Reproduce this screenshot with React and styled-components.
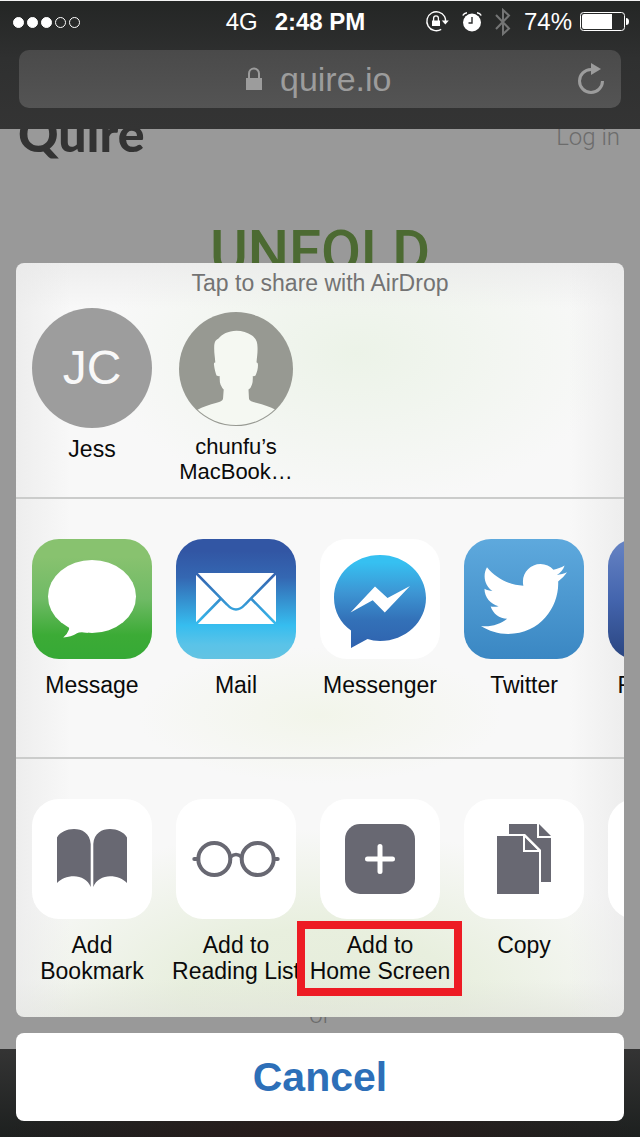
import React from "react";
import styled, { createGlobalStyle } from "styled-components";
import { FaTwitter } from "react-icons/fa";

const GlobalStyle = createGlobalStyle`
  *, *::before, *::after { box-sizing: border-box; }
  body { margin: 0; background: #999; font-family: "Liberation Sans", Arial, sans-serif; }
  button { border: 0; padding: 0; background: none; color: inherit; font: inherit; cursor: pointer; }
  svg { display: block; flex: none; }
`;

const GLYPH = "#686872";

const Screen = styled.div`
  position: relative;
  display: flex;
  flex-direction: column;
  min-height: 100vh;
  overflow: hidden;
`;

/* ---------- browser chrome ---------- */

const Chrome = styled.header`
  position: relative;
  z-index: 1;
  padding: 0 19px 21px;
  border-top: 1px solid #f4f4f4;
  background: linear-gradient(#242625, #2f3030 45%, #343434);
`;

const StatusBar = styled.div`
  display: grid;
  grid-template-columns: 1fr auto 1fr;
  align-items: center;
  column-gap: 17px;
  height: 42px;
  margin: 0 -8px 7px;
  color: #fff;
  font-size: 24px;
  line-height: 28px;
`;

const StatusGroup = styled.div`
  display: flex;
  align-items: center;
  justify-content: ${(p) => (p.$end ? "flex-end" : "space-between")};
  gap: 13px;
`;

const Clock = styled.time`
  font-weight: 700;
`;

const Signal = styled.div`
  display: flex;
  gap: 3px;
  padding-left: 2px;
`;

const Dot = styled.span`
  width: 11px;
  height: 11px;
  border: 1px solid #fff;
  border-radius: 50%;
  background: ${(p) => (p.$on ? "#fff" : "transparent")};
`;

const Power = styled.div`
  display: flex;
  align-items: center;
  gap: 8px;
`;

const AddressBar = styled.div`
  display: grid;
  grid-template-columns: 1fr auto 1fr;
  align-items: center;
  height: 58px;
  padding: 0 16px;
  border-radius: 10px;
  background: linear-gradient(#4a4a4a, #545454);
  color: #9c9c9c;
`;

const Address = styled.label`
  grid-column: 2;
  display: flex;
  align-items: center;
  gap: 18px;
`;

const AddressInput = styled.input`
  width: 114px;
  height: 40px;
  padding: 0;
  border: 0;
  outline: 0;
  background: none;
  color: inherit;
  font: 34px/40px "Liberation Sans", Arial, sans-serif;
`;

const ReloadButton = styled.button`
  justify-self: end;
`;

/* ---------- dimmed page behind the sheet ---------- */

const WebPage = styled.main`
  flex: 1;
  display: flex;
  flex-direction: column;
  align-items: center;
  background: #999;
  color: #6c6c6c;
  font-family: Roboto, sans-serif;
  font-weight: 300;
`;

const SiteNav = styled.nav`
  display: flex;
  align-items: center;
  justify-content: space-between;
  align-self: stretch;
  height: 56px;
  margin-top: -24px;
  padding: 0 20px 0 18px;
`;

const Brand = styled.a`
  color: #333;
  font: 900 50px/56px Lato, sans-serif;
  text-decoration: none;
`;

const LoginLink = styled.a`
  padding-top: 8px;
  color: inherit;
  font-size: 24px;
  line-height: 28px;
  text-decoration: none;
`;

const Headline = styled.h1`
  margin: 58px 0 auto;
  color: #4c6a32;
  font: 500 58px/64px Roboto, sans-serif;
`;

const Separator = styled.p`
  margin: 0 0 20px;
  font-size: 24px;
  line-height: 28px;
`;

const BottomBar = styled.footer`
  height: 88px;
  background:
    radial-gradient(ellipse 50% 60% at 50% 100%, #291b1a, #291b1a00),
    linear-gradient(#343434, #1d201f);
`;

/* ---------- share sheet ---------- */

const Sheet = styled.div`
  position: absolute;
  right: 16px;
  bottom: 16px;
  left: 16px;
  display: flex;
  flex-direction: column;
  gap: 16px;
`;

const Panel = styled.section`
  overflow: hidden;
  border-radius: 8px;
  background:
    linear-gradient(90deg, #e8e8e8aa, #e8e8e800 9%, #e8e8e800 91%, #e8e8e8aa),
    linear-gradient(#e6e6e699, #e6e6e600 6%, #e6e6e600 95%, #e0e2da99),
    radial-gradient(ellipse 56% 22% at 50% 97%, #e6eddb, #e8efde 40%, #e8efde00),
    radial-gradient(ellipse 42% 20% at 56% 12%, #ecf3e8, #ecf3e800),
    radial-gradient(ellipse 30% 9% at 50% 60%, #f2f5ea, #f2f5ea00),
    #f8f8f8;
`;

const Group = styled.div`
  height: 258px;
  padding: 40px 16px 0;

  & + & { border-top: 2px solid #cbcccb; height: 260px; }
`;

const AirDropGroup = styled(Group)`
  height: 234px;
  padding-top: 7px;
`;

const AirDropTitle = styled.h2`
  margin: 0 0 12px;
  color: #737373;
  font-size: 23px;
  font-weight: 400;
  line-height: 26px;
  text-align: center;
`;

const Row = styled.ul`
  display: flex;
  gap: 24px;
  margin: 0;
  padding: 0;
  list-style: none;
`;

const ItemButton = styled.button`
  display: flex;
  flex-direction: column;
  align-items: center;
  gap: ${(p) => (p.$contact ? 8 : 13)}px;
  width: 120px;
  padding-top: ${(p) => (p.$inset ? 4 : 0)}px;
`;

const Tile = styled.span`
  display: grid;
  place-items: center;
  width: 120px;
  height: 120px;
  overflow: hidden;
  border-radius: 27px;
  background: ${(p) => p.$fill || "#fff"};
  color: #fff;
`;

const Label = styled.span`
  position: relative;
  color: #0a0a0a;
  font-size: ${(p) => (p.$small ? 22 : 23)}px;
  line-height: ${(p) => (p.$small ? 25 : 26)}px;
  text-align: center;
  white-space: pre;
`;

const Highlight = styled.span`
  position: absolute;
  top: -11px;
  right: -12px;
  bottom: -12px;
  left: -13px;
  border: 8px solid #ed1c24;
`;

const Initials = styled.span`
  display: grid;
  place-items: center;
  width: 120px;
  height: 120px;
  border-radius: 50%;
  background: #9d9d9d;
  color: #f8f8f8;
  font-size: 48px;
  line-height: 56px;
`;

const CancelButton = styled.button`
  height: 88px;
  border-radius: 8px;
  background: #fff;
  color: #2d6fb8;
  font-size: 41px;
  font-weight: 700;
  line-height: 48px;
`;

/* ---------- drawings ---------- */

const RotationLock = () => (
  <svg width="24" height="24" viewBox="0 0 24 24" fill="none" aria-hidden="true">
    <path d="M19.6 6.5A9.5 9.5 0 1 0 16.2 19.4M19.6 6.5A9.5 9.5 0 0 1 20.5 11" stroke="#fff" strokeWidth="1.4" />
    <path d="M16.8 10.5h7L20.3 14.5z" fill="#fff" />
    <path d="M7 10.5h8V16H7z" fill="#fff" />
    <path d="M8.6 11V8.3a2.4 2.4 0 0 1 4.8 0V11" stroke="#fff" strokeWidth="1.3" />
  </svg>
);

const Alarm = () => (
  <svg width="20" height="20" viewBox="0 0 20 20" fill="none" aria-hidden="true">
    <circle cx="10" cy="10.500" r="9" fill="#fff" />
    <path d="M10 5v6H6.500" stroke="#2a2b2b" strokeWidth="1.400" />
    <path d="M.8 4.500Q2 1.500 5 1.300M19.200 4.500Q18 1.500 15 1.300" stroke="#2a2b2b" strokeWidth="3.500" />
    <path d="M.8 3.500Q2 1 5 .8M19.200 3.500Q18 1 15 .8" stroke="#fff" strokeWidth="1.500" />
  </svg>
);

const Bluetooth = () => (
  <svg width="16" height="28" viewBox="0 0 16 28" fill="none" aria-hidden="true">
    <path d="M1 7l13 13.500-6 5.500V2l6 5.500L1 21" stroke="#747575" strokeWidth="2" />
  </svg>
);

const Battery = () => (
  <svg width="49" height="20" viewBox="0 0 49 20" fill="none" aria-hidden="true">
    <rect x=".5" y=".5" width="44" height="18" rx="3" stroke="#fff" />
    <path d="M2 4q0-2 2-2h28v15H4q-2 0-2-2z" fill="#fff" />
    <path d="M46 6q3 0 3 3.500T46 13z" fill="#fff" />
  </svg>
);

const Padlock = () => (
  <svg width="16" height="24" viewBox="0 0 16 24" fill="none" aria-hidden="true">
    <path d="M0 11h16v12H0z" fill="#9c9c9c" />
    <path d="M3 12V6.500a5 5 0 0 1 10 0V12" stroke="#9c9c9c" strokeWidth="2" />
  </svg>
);

const Reload = () => (
  <svg width="28" height="34" viewBox="0 0 28 34" fill="none" aria-hidden="true">
    <path d="M14 7.500A11.500 11.500 0 1 0 25.500 19" stroke="#9c9c9c" strokeWidth="3" />
    <path d="M14 1l10 6-10 6z" fill="#9c9c9c" />
  </svg>
);

const Person = () => (
  <svg width="114" height="114" viewBox="0 0 114 114" aria-hidden="true">
    <defs>
      <clipPath id="avatar-clip"><circle cx="57" cy="57" r="56" /></clipPath>
    </defs>
    <circle cx="57" cy="57" r="57" fill="#979992" />
    <path
      clipPath="url(#avatar-clip)"
      fill="#f5f8f2"
      d="M57.500 18.700C49 19 43 22 39.500 26.500C36 28 35.300 31 35.200 35C35 41 36 45 36.300 50.500C35 50 34.800 51.500 35 53C35.500 57 36.500 61 37.500 63.500Q40 64.500 40.700 64Q40.500 70 41.500 72.500Q43 76 44.700 77.500L44 87Q43 89.500 37.700 90.700C30 93 24 94.500 18 98V114H97V98C91 94.500 85 93 77 90.700Q71 89.500 70 87L69.500 77.500Q72 76 73 72.500Q74 70 73.800 64Q75 64.500 76.500 63.500C78 60 79 57 79 53Q79 50 77.500 50.500C78 45 78.800 40 78.500 35C78.500 30 77 26.500 73 23.500Q66 18.700 57.500 18.700Z"
    />
  </svg>
);

const Art = ({ children }) => (
  <svg width="120" height="120" viewBox="0 0 120 120" fill="none" aria-hidden="true">{children}</svg>
);

const MessageArt = () => (
  <Art>
    <ellipse cx="60" cy="57.500" rx="44" ry="36.500" fill="#fff" />
    <path d="M33 85Q38 87.500 37 90.500Q35.500 95 31.200 98.500Q39 98 45 94.300Q47.500 92.600 56 93.800L54 80z" fill="#fff" />
  </Art>
);

const MailArt = () => (
  <Art>
    <defs>
      <linearGradient id="mail-sky" gradientUnits="userSpaceOnUse" x1="0" y1="0" x2="0" y2="120">
        <stop offset=".1" stopColor="#3256a4" />
        <stop offset=".32" stopColor="#3467b2" />
        <stop offset=".72" stopColor="#36bdef" />
      </linearGradient>
    </defs>
    <path d="M20 34h80v51H20z" fill="#fff" />
    <path d="M20 34L51 65.500Q60 75.500 69 65.500L100 34M45 59.500L20 85M75 59.500L100 85" stroke="url(#mail-sky)" strokeWidth="2.500" />
  </Art>
);

const MessengerArt = () => (
  <Art>
    <defs>
      <linearGradient id="messenger-blue" gradientUnits="userSpaceOnUse" x1="0" y1="16" x2="0" y2="109">
        <stop offset=".08" stopColor="#36c0f1" />
        <stop offset=".4" stopColor="#3d96d4" />
        <stop offset=".7" stopColor="#3371b8" />
        <stop offset="1" stopColor="#2f62ae" />
      </linearGradient>
    </defs>
    <path d="M60 16C85.500 16 106 35 106 59S85.500 102 60 102Q53 102 47.500 100L31 109V91.500C20.500 84 14 72.500 14 59C14 35 34.500 16 60 16Z" fill="url(#messenger-blue)" />
    <path d="M30.500 73.500L55 47.500L67.500 59L90 47L64.800 73.500L52.700 61.300Z" fill="#fff" />
  </Art>
);

const BookArt = () => (
  <Art>
    <path d="M25 38.500C28 33 35 30 42 30C50 30 58 34 58.700 45V88C56 81 49 77.300 42 77.300C35 77.300 29 80 25 84ZM95 38.500C92 33 85 30 78 30C70 30 62 34 61.300 45V88C64 81 71 77.300 78 77.300C85 77.300 91 80 95 84Z" fill={GLYPH} />
  </Art>
);

const GlassesArt = () => (
  <Art>
    <g stroke={GLYPH} strokeWidth="4">
      <circle cx="38.300" cy="60" r="16" />
      <circle cx="81.700" cy="60" r="16" />
      <path d="M54.500 58Q60 53 65.500 58" strokeWidth="3.500" />
      <path d="M18.300 60H21M99 60h2.700" strokeLinecap="round" />
    </g>
  </Art>
);

const AddArt = () => (
  <Art>
    <rect x="25" y="25" width="70" height="70" rx="15" fill={GLYPH} />
    <path d="M60 47.500v25M47.500 60h25" stroke="#fff" strokeWidth="5" strokeLinecap="round" />
  </Art>
);

const CopyArt = () => (
  <Art>
    <path d="M45 25H75L87 37V83H45z" fill={GLYPH} />
    <path d="M74 24V38H88" stroke="#fff" strokeWidth="2" />
    <path d="M31 35H61L77 51V97H31z" fill="#fff" />
    <path d="M33 37H60L75 52V95H33z" fill={GLYPH} />
    <path d="M60 36V52H76" stroke="#fff" strokeWidth="2" />
    <path d="M60 36L76 52" stroke="#fff" strokeWidth="2" />
  </Art>
);

/* ---------- content ---------- */

const apps = [
  { name: "Message", fill: "linear-gradient(#88c26f 15%, #6fba65 50%, #3cab36 80%, #36a936)", art: <MessageArt /> },
  { name: "Mail", fill: "linear-gradient(#3256a4 10%, #3467b2 32%, #36bdef 72%, #5ac3e8 88%, #63c3e2)", art: <MailArt /> },
  { name: "Messenger", art: <MessengerArt /> },
  { name: "Twitter", fill: "linear-gradient(#5ea9dd, #3a87c3)", art: <FaTwitter size={86} aria-hidden="true" /> },
  { name: "Facebook", fill: "linear-gradient(#6784c4, #4465ae 50%, #2a4580)" },
];

const actions = [
  { name: "Add\nBookmark", art: <BookArt /> },
  { name: "Add to\nReading List", art: <GlassesArt /> },
  { name: "Add to\nHome Screen", art: <AddArt />, highlighted: true },
  { name: "Copy", art: <CopyArt /> },
  { name: "", art: null },
];

const ShareItem = ({ item }) => (
  <li>
    <ItemButton type="button">
      <Tile $fill={item.fill}>{item.art}</Tile>
      <Label>
        {item.name}
        {item.highlighted && <Highlight />}
      </Label>
    </ItemButton>
  </li>
);

export default function App() {
  return (
    <Screen>
      <GlobalStyle />
      <Chrome>
        <StatusBar>
          <StatusGroup>
            <Signal>
              {[1, 2, 3, 4, 5].map((n) => <Dot key={n} $on={n <= 3} />)}
            </Signal>
            <span>4G</span>
          </StatusGroup>
          <Clock>2:48 PM</Clock>
          <StatusGroup $end>
            <RotationLock />
            <Alarm />
            <Bluetooth />
            <Power>
              <span>74%</span>
              <Battery />
            </Power>
          </StatusGroup>
        </StatusBar>
        <AddressBar>
          <Address>
            <Padlock />
            <AddressInput type="text" defaultValue="quire.io" aria-label="Address" />
          </Address>
          <ReloadButton type="button" aria-label="Reload"><Reload /></ReloadButton>
        </AddressBar>
      </Chrome>

      <WebPage>
        <SiteNav>
          <Brand href="#home">Quire</Brand>
          <LoginLink href="#login">Log in</LoginLink>
        </SiteNav>
        <Headline>UNFOLD</Headline>
        <Separator>or</Separator>
      </WebPage>
      <BottomBar />

      <Sheet role="dialog" aria-label="Share">
        <Panel>
          <AirDropGroup>
            <AirDropTitle>Tap to share with AirDrop</AirDropTitle>
            <Row>
              <li>
                <ItemButton type="button" $contact>
                  <Initials>JC</Initials>
                  <Label>Jess</Label>
                </ItemButton>
              </li>
              <li>
                <ItemButton type="button" $contact $inset>
                  <Person />
                  <Label $small>{"chunfu’s\nMacBook…"}</Label>
                </ItemButton>
              </li>
            </Row>
          </AirDropGroup>
          <Group as="div">
            <Row>{apps.map((a) => <ShareItem key={a.name} item={a} />)}</Row>
          </Group>
          <Group>
            <Row>{actions.map((a) => <ShareItem key={a.name} item={a} />)}</Row>
          </Group>
        </Panel>
        <CancelButton type="button">Cancel</CancelButton>
      </Sheet>
    </Screen>
  );
}
